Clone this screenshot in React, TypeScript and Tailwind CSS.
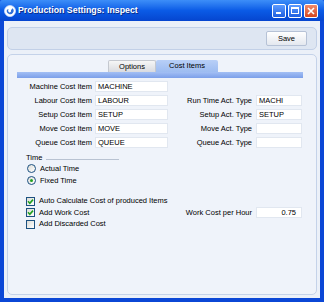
import React from "react";

const Field = ({ value, w, right }: { value?: string; w: string; right?: boolean }) => (
  <div
    className={`${w} h-[11px] bg-white border border-[#e1e7f0] px-[2px] flex items-center ${
      right ? "justify-end pr-[5px]" : ""
    }`}
  >
    {value}
  </div>
);

const Check = ({ checked }: { checked?: boolean }) => (
  <div className="w-[9px] h-[9px] border border-[#1c5180] bg-gradient-to-br from-[#dcdcd6] to-white flex items-center justify-center">
    {checked && (
      <svg width="7" height="7" viewBox="0 0 7 7">
        <path d="M1 3.3 L2.8 5.2 L6 1.6" fill="none" stroke="#21a121" strokeWidth="1.6" />
      </svg>
    )}
  </div>
);

const Radio = ({ on }: { on?: boolean }) => (
  <div className="w-[9px] h-[9px] rounded-full border border-[#1c5180] bg-gradient-to-br from-[#dcdcd6] to-white flex items-center justify-center">
    {on && <div className="w-[3px] h-[3px] rounded-full bg-[#21a121]" />}
  </div>
);

const TitleBar = () => (
  <div className="h-[21px] shrink-0 flex items-center pl-[4px] pr-[6px] bg-gradient-to-b from-[#3d8ef8] via-[#0b5be6] to-[#0645cf] rounded-t-[2px]">
    {/* app icon */}
    <svg width="12" height="12" viewBox="0 0 12 12">
      <circle cx="6" cy="6" r="5.5" fill="#ffffff" stroke="#cfe0ff" strokeWidth="0.8" />
      <path d="M3 4.5 A3.4 3.4 0 1 0 8.5 3.2 L7 5.3 A1.5 1.5 0 1 1 4.8 4.6 Z" fill="#2f6fd8" />
    </svg>
    <span className="ml-[2px] text-white font-bold text-[8.8px] [text-shadow:1px_1px_0_#0a2d8a]">
      Production Settings: Inspect
    </span>
    <div className="ml-auto flex gap-[2px]">
      <div className="w-[14px] h-[14px] rounded-[2px] border border-white bg-gradient-to-b from-[#5c9bff] to-[#1f5fe0] flex items-end pl-[3px] pb-[3px]">
        <div className="w-[5px] h-[2px] bg-white" />
      </div>
      <div className="w-[14px] h-[14px] rounded-[2px] border border-white bg-gradient-to-b from-[#5c9bff] to-[#1f5fe0] flex items-center justify-center">
        <div className="w-[8px] h-[7px] border border-white border-t-2" />
      </div>
      <div className="w-[14px] h-[14px] rounded-[2px] border border-white bg-gradient-to-b from-[#f08a6a] to-[#d6451c] flex items-center justify-center">
        <svg width="8" height="8" viewBox="0 0 8 8">
          <path d="M1 1 L7 7 M7 1 L1 7" stroke="#ffffff" strokeWidth="1.6" />
        </svg>
      </div>
    </div>
  </div>
);

const rows: { label: string; value: string; rLabel?: string; rValue?: string }[] = [
  { label: "Machine Cost Item", value: "MACHINE" },
  { label: "Labour Cost Item", value: "LABOUR", rLabel: "Run Time Act. Type", rValue: "MACHI" },
  { label: "Setup Cost Item", value: "SETUP", rLabel: "Setup Act. Type", rValue: "SETUP" },
  { label: "Move Cost Item", value: "MOVE", rLabel: "Move Act. Type", rValue: "" },
  { label: "Queue Cost Item", value: "QUEUE", rLabel: "Queue Act. Type", rValue: "" },
];

export default function App() {
  return (
    <div className="w-[324px] h-[302px] flex flex-col bg-[#0b47d6] font-['Liberation_Sans',Arial,sans-serif] text-[7.5px] leading-none text-black overflow-hidden">
      <TitleBar />
      <div className="flex-1 mx-[4px] mb-[4px] bg-[#ebf0f8] flex flex-col px-[3px] pt-[6px] pb-[3px] gap-[4px]">
        {/* toolbar */}
        <div className="h-[23px] shrink-0 rounded-[5px] border border-[#c2d0e7] bg-[#dee6f2] flex items-center justify-end pr-[9px]">
          <div className="w-[41px] h-[15px] rounded-[2px] border border-[#b6c2d6] bg-gradient-to-b from-white to-[#e4e8ef] flex items-center justify-center">
            Save
          </div>
        </div>

        {/* main panel */}
        <div className="flex-1 rounded-[5px] border border-[#c4d2e9] bg-[#eff3fa] flex flex-col pt-[5px]">
          {/* tabs */}
          <div className="flex justify-center h-[12px] pl-[2px]">
            <div className="w-[48px] rounded-t-[2px] border border-b-0 border-[#c4c8cf] bg-gradient-to-b from-[#f6f6f6] to-[#d9dbe0] flex items-center justify-center">
              Options
            </div>
            <div className="w-[62px] rounded-t-[2px] bg-gradient-to-b from-[#b8cff7] to-[#9dbcf1] flex items-center justify-center">
              Cost Items
            </div>
          </div>
          <div className="h-[6px] ml-[9px] mr-[13px] bg-gradient-to-b from-[#a3bff4] to-[#7c9fe9]" />

          {/* fields */}
          <div className="flex flex-col gap-[3px] mt-[3px]">
            {rows.map((r) => (
              <div key={r.label} className="flex items-center h-[11px]">
                <div className="w-[84px] text-right">{r.label}</div>
                <div className="ml-[3px]">
                  <Field value={r.value} w="w-[73px]" />
                </div>
                {r.rLabel !== undefined && (
                  <>
                    <div className="w-[84px] text-right">{r.rLabel}</div>
                    <div className="ml-[4px]">
                      <Field value={r.rValue} w="w-[46px]" />
                    </div>
                  </>
                )}
              </div>
            ))}
          </div>

          {/* time */}
          <div className="flex items-end pl-[18px] mt-[4px] h-[9px]">
            <span>Time</span>
            <div className="ml-[4px] mb-[1px] w-[73px] h-px bg-[#b9c3d2]" />
          </div>
          <div className="flex flex-col gap-[3px] mt-[3px] pl-[19px]">
            <div className="flex items-center h-[9px] gap-[4px]">
              <Radio />
              <span>Actual Time</span>
            </div>
            <div className="flex items-center h-[9px] gap-[4px]">
              <Radio on />
              <span>Fixed Time</span>
            </div>
          </div>

          {/* checkboxes */}
          <div className="flex flex-col gap-[1.5px] mt-[11px]">
            <div className="flex items-center h-[10px] pl-[18px] gap-[4px]">
              <Check checked />
              <span>Auto Calculate Cost of produced Items</span>
            </div>
            <div className="flex items-center h-[10px]">
              <div className="w-[160px] flex items-center pl-[18px] gap-[4px]">
                <Check checked />
                <span>Add Work Cost</span>
              </div>
              <div className="w-[84px] text-right">Work Cost per Hour</div>
              <div className="ml-[4px]">
                <Field value="0.75" w="w-[46px]" right />
              </div>
            </div>
            <div className="flex items-center h-[10px] pl-[18px] gap-[4px]">
              <Check />
              <span>Add Discarded Cost</span>
            </div>
          </div>
        </div>
      </div>
    </div>
  );
}
